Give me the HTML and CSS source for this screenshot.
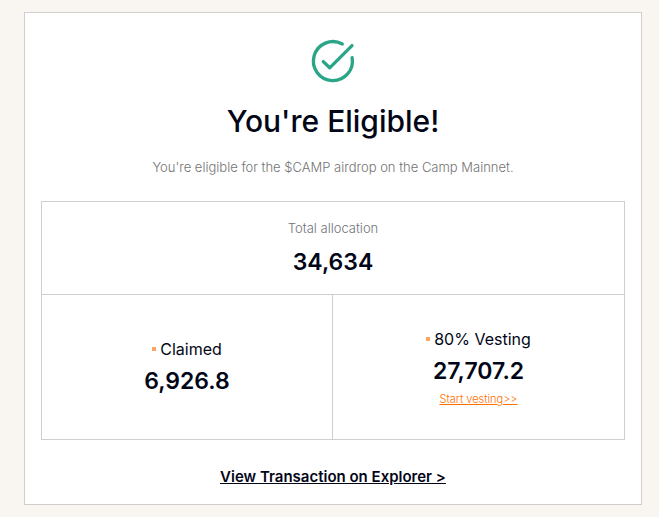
FILE: index.html
```html
<!DOCTYPE html>
<html lang="en">
<head>
<meta charset="utf-8">
<meta name="viewport" content="width=device-width, initial-scale=1">
<title>Airdrop eligibility</title>
<link rel="stylesheet" href="styles.css">
</head>
<body>
<main class="card">
  <svg class="check" viewBox="0 0 48 48" aria-hidden="true">
    <path d="M33.300 7A19.500 19.500 0 1 0 43.100 20.600"/>
    <path d="M14.300 24.600l6.400 6.200L43 8.600"/>
  </svg>
  <h1 class="title">You're Eligible!</h1>
  <p class="intro">You're eligible for the $CAMP airdrop on the Camp Mainnet.</p>
  <section class="allocation">
    <div class="cell total">
      <span class="caption">Total allocation</span>
      <strong class="amount">34,634</strong>
    </div>
    <div class="cell claimed">
      <span class="label">Claimed</span>
      <strong class="amount">6,926.8</strong>
    </div>
    <div class="cell">
      <span class="label">80% Vesting</span>
      <strong class="amount">27,707.2</strong>
      <a class="start" href="#">Start vesting&gt;&gt;</a>
    </div>
  </section>
  <a class="explorer" href="#">View Transaction on Explorer &gt;</a>
</main>
</body>
</html>
```
FILE: styles.css
```css
* {
  box-sizing: border-box;
}

body {
  margin: 0;
  padding: 12px 17px 12px 24px;
  background: #f9f5f0;
  color: #020617;
  font-family: Inter, "Liberation Sans", sans-serif;
}

.card {
  display: flex;
  flex-direction: column;
  align-items: center;
  padding: 24px 16px 15px;
  border: 1px solid #cfcfcf;
  background: #fff;
}

.check {
  width: 48px;
  height: 48px;
  fill: none;
  stroke: #2aa587;
  stroke-width: 3.3;
  stroke-linecap: round;
  stroke-linejoin: round;
}

.title {
  margin: 16px 0;
  font-size: 30px;
  line-height: 40px;
  font-weight: 500;
}

.intro {
  margin: 0 0 24px;
  color: #737373;
  font-size: 13px;
  line-height: 20px;
  font-weight: 300;
}

.allocation {
  display: grid;
  grid-template-columns: 1fr 1fr;
  width: 100%;
  border: 1px solid #cfcfcf;
}

.cell {
  display: flex;
  flex-direction: column;
  align-items: center;
  justify-content: center;
  min-height: 144px;
}

.total {
  grid-column: 1 / -1;
  min-height: 93px;
  padding-top: 2px;
  gap: 6px;
  border-bottom: 1px solid #cfcfcf;
}

.claimed {
  border-right: 1px solid #cfcfcf;
}

.caption {
  color: #70727a;
  font-size: 13px;
  line-height: 20px;
  font-weight: 300;
}

.amount {
  font-size: 23px;
  line-height: 36px;
  font-weight: 600;
}

.label {
  display: flex;
  align-items: center;
  gap: 4px;
  font-size: 16px;
  line-height: 28px;
}

.label::before {
  content: "";
  width: 4px;
  height: 4px;
  background: #ffa561;
}

.start {
  color: #ff6f00;
  font-size: 11px;
  line-height: 20px;
  font-weight: 300;
}

.explorer {
  margin: 25px 0 0;
  color: inherit;
  font-size: 15px;
  line-height: 24px;
  font-weight: 600;
}
```
